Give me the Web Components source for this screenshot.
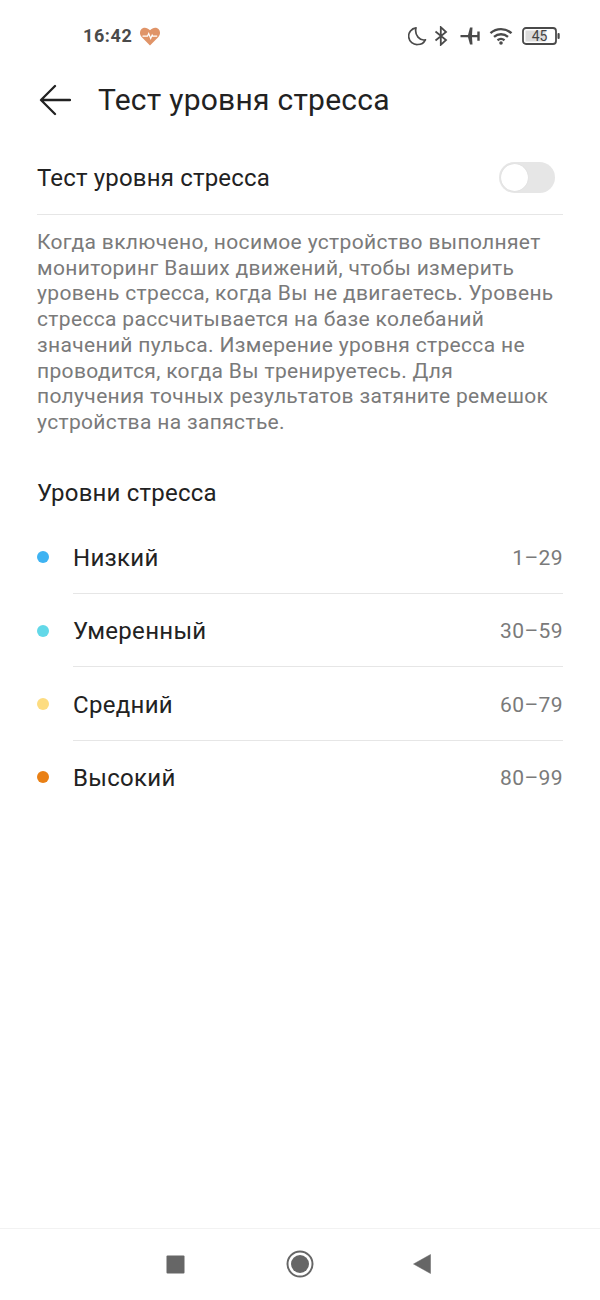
<!DOCTYPE html>
<html><head><meta charset="utf-8"><style>
html,body{margin:0;padding:0;background:#fff}
body{width:600px;height:1300px;font-family:Roboto,"Noto Sans",sans-serif;overflow:hidden}
</style></head><body>
<app-screen>
<status-bar></status-bar>
<title-bar>Тест уровня стресса</title-bar>
<toggle-row>Тест уровня стресса</toggle-row>
<desc-text>Когда включено, носимое устройство выполняет мониторинг Ваших движений, чтобы измерить уровень стресса, когда Вы не двигаетесь. Уровень стресса рассчитывается на базе колебаний значений пульса. Измерение уровня стресса не проводится, когда Вы тренируетесь. Для получения точных результатов затяните ремешок устройства на запястье.</desc-text>
<section-head>Уровни стресса</section-head>
<level-row color="#3eb3f2" range="1–29" line>Низкий</level-row>
<level-row color="#62d8e8" range="30–59" line>Умеренный</level-row>
<level-row color="#fddc80" range="60–79" line>Средний</level-row>
<level-row color="#e98015" range="80–99">Высокий</level-row>
<nav-bar slot="nav"></nav-bar>
</app-screen>
<script>
function def(name, html, init){
  customElements.define(name, class extends HTMLElement{
    constructor(){super();this.attachShadow({mode:'open'}).innerHTML=html;}
    connectedCallback(){if(init)init(this);}
  });
}
def('app-screen',`<style>:host{display:flex;flex-direction:column;width:600px;height:1300px;color:#1f1f1f}
main{flex:1;display:flex;flex-direction:column}</style><main><slot></slot></main><slot name="nav"></slot>`);
def('status-bar',`<style>:host{display:flex;align-items:center;height:72px;box-sizing:border-box;padding:0 40px 0 83px;color:#4a4a4a}
.t{font-size:18px;font-weight:700;letter-spacing:.6px;line-height:72px}
.h{margin-left:7px;display:block}
.sp{flex:1}
.r{display:flex;align-items:center}
svg{display:block}
.b{position:relative;width:38px;height:18px;margin-left:9px}
.n{position:absolute;left:2px;width:31px;top:0;height:18px;line-height:18px;text-align:center;font-size:14px;color:#444;font-family:Roboto,sans-serif}
</style>
<span class="t">16:42</span>
<svg class="h" width="22" height="20" viewBox="0 0 22 20"><path d="M11 19.500 2.600 11C.4 8.700.4 5.200 2.500 3.100 4.700 1 8.200 1.200 11 4.300 13.800 1.200 17.300 1 19.500 3.100c2.100 2.100 2.100 5.600-.1 7.900Z" fill="#e09468"/><path d="M3.500 10.200h5l1.200-2.700 2 5 1.500-3.400.7 1.100h4.300" fill="none" stroke="#fff" stroke-width="1.200"/></svg>
<span class="sp"></span>
<div class="r">
<svg width="20" height="20" viewBox="0 0 20 20" style="margin-right:6px"><path d="M8 1.800A8.400 8.400 0 0 0 9.800 18.500c3.400 0 6.200-1.900 7.600-4.700C12 15 6.200 9.500 8 1.800Z" fill="none" stroke="#4a4a4a" stroke-width="1.700" stroke-linejoin="round"/></svg>
<svg width="14" height="20" viewBox="0 0 14 20" style="margin-right:12px"><path d="M1.500 5.500 12 14l-5.200 4.800V1.200L12 6 1.500 14.500" fill="none" stroke="#4a4a4a" stroke-width="1.800"/></svg>
<svg width="21" height="18" viewBox="0 0 20 18" style="margin-right:8px"><path d="M0 8h7.500L9.500.5H12L11.500 8h5.300V4.600h2.400v9.200h-2.400V10.200h-5.300l.5 7.300H9.500L7.500 10.200H0Z" fill="#4a4a4a"/></svg>
<svg width="24" height="18" viewBox="0 0 23 18"><g fill="none" stroke="#4a4a4a" stroke-width="2.400"><path d="M1 6.200c6-5.400 15-5.400 21 0"/><path d="M4.500 9.800c4-3.400 10-3.400 14 0"/><path d="M8 13.200c2-1.500 5-1.500 7 0"/></g><circle cx="11.500" cy="16" r="1.800" fill="#4a4a4a"/></svg>
<div class="b"><svg width="38" height="18" viewBox="0 0 38 18"><rect x="1" y="1" width="33" height="16" rx="3" fill="#fff" stroke="#4a4a4a" stroke-width="1.800"/><rect x="3.500" y="3.500" width="20" height="11" fill="#dcdcdc"/><rect x="35.500" y="6" width="2.200" height="6" rx="1" fill="#4a4a4a"/></svg><span class="n">45</span></div>
</div>`);
def('title-bar',`<style>:host{display:flex;align-items:center;height:56px;padding-left:39px}
svg{display:block}
span{margin-left:27px;font-size:30px;letter-spacing:.25px;line-height:56px;color:#222}
</style><svg width="32" height="32" viewBox="0 0 32 32"><path d="M31 16H3M16 2 2 16l14 14" fill="none" stroke="#222" stroke-width="2.300" stroke-linecap="round" stroke-linejoin="round"/></svg><span><slot></slot></span>`);
def('toggle-row',`<style>:host{display:flex;align-items:center;justify-content:space-between;margin:22px 37px 0;height:64px;border-bottom:1px solid #e6e6e6;font-size:24px;color:#222;letter-spacing:.17px}
.sw{width:56px;height:31px;border-radius:16px;background:#e6e6e6;margin-right:8px;position:relative;top:-5px;box-sizing:border-box;padding:2px}
.k{width:27px;height:27px;border-radius:50%;background:#fff;box-shadow:0 0 1px #ccc}
span{position:relative;top:-4px}
</style><span><slot></slot></span><div class="sw"><div class="k"></div></div>`);
def('desc-text',`<style>:host{display:block;margin:15px 37px 0;font-size:21px;line-height:25.700px;color:#7a7a7a;letter-spacing:.34px}</style><slot></slot>`);
def('section-head',`<style>:host{display:block;margin-top:42px;padding-left:37px;font-size:24px;line-height:30px;color:#222;letter-spacing:.2px}</style><slot></slot>`);
def('level-row',`<style>:host{display:flex;align-items:center;height:73.400px;box-sizing:border-box;padding-left:37px}
:host(:first-of-type){margin-top:13px}
.d{width:12px;height:12px;border-radius:50%;flex:none}
.b{flex:1;margin:0 37px 0 24px;height:100%;display:flex;align-items:center;justify-content:space-between;box-sizing:border-box;padding-top:2px;border-bottom:1px solid transparent}
.l{font-size:24px;color:#222;letter-spacing:.3px}
.v{font-size:21px;color:#7a7a7a;letter-spacing:.4px}
</style><span class="d"></span><div class="b"><span class="l"><slot></slot></span><span class="v"></span></div>`,el=>{
  const s=el.shadowRoot;
  s.querySelector('.d').style.background=el.getAttribute('color');
  s.querySelector('.v').textContent=el.getAttribute('range');
  if(el.hasAttribute('line'))s.querySelector('.b').style.borderBottomColor='#e6e6e6';
});
def('nav-bar',`<style>:host{display:flex;align-items:center;height:72px;box-sizing:border-box;border-top:1px solid #f2f2f2;padding-left:166px;padding-bottom:1px}
svg{display:block}
</style>
<svg width="19" height="19" viewBox="0 0 19 19"><rect x="0.500" y="0.500" width="18" height="18" rx="1" fill="#666"/></svg>
<svg width="28" height="28" viewBox="0 0 28 28" style="margin-left:101px"><circle cx="14" cy="14" r="12.500" fill="none" stroke="#666" stroke-width="2"/><circle cx="14" cy="14" r="9" fill="#666"/></svg>
<svg width="18" height="20" viewBox="0 0 18 20" style="margin-left:99px"><path d="M17.500.5v19L.5 10Z" fill="#666" stroke="#666" stroke-width=".5" stroke-linejoin="round"/></svg>`);
</script>
</body></html>
